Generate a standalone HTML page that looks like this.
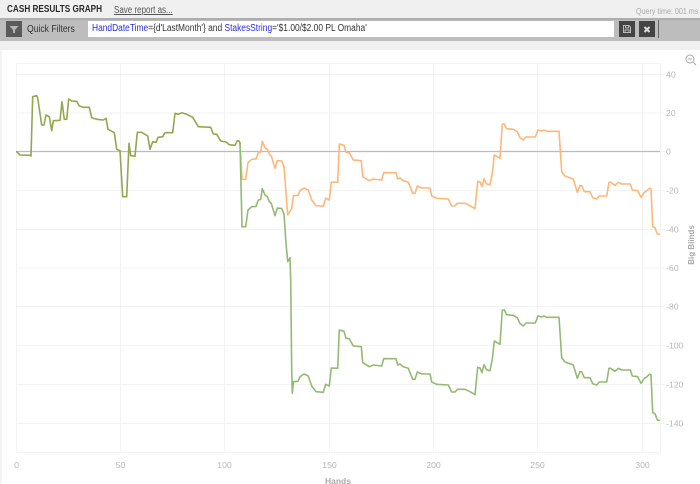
<!DOCTYPE html>
<html><head><meta charset="utf-8">
<style>
html,body{margin:0;padding:0;width:700px;height:484px;overflow:hidden;background:#fff;font-family:"Liberation Sans",sans-serif}
.abs{position:absolute}
.t{transform-origin:0 50%;white-space:nowrap}
#w{position:absolute;left:0;top:0;width:700px;height:484px;filter:blur(0.35px);overflow:hidden}
</style></head>
<body>
<div id="w">
<div class="abs" style="left:0;top:0;width:700px;height:50px;background:#f0f0f0"></div>
<div class="abs" style="left:0;top:50px;width:2px;height:434px;background:#f4f4f4"></div>
<div class="abs t" style="left:7px;top:3px;font-size:10px;font-weight:bold;line-height:13px;color:#2a2a2a;transform:scaleX(.82)">CASH RESULTS GRAPH</div>
<div class="abs t" style="left:114px;top:4px;font-size:10px;line-height:13px;color:#555;text-decoration:underline;transform:scaleX(.8)">Save report as...</div>
<div class="abs t" style="left:636px;top:6px;font-size:8.5px;line-height:10px;color:#aaa;transform:scaleX(.84)">Query time: 001 ms</div>
<div class="abs" style="left:0;top:18px;width:700px;height:23px;background:#bdbdbd"></div>
<div class="abs" style="left:0;top:18px;width:700px;height:2px;background:#adadad"></div>
<div class="abs" style="left:6px;top:21px;width:16px;height:16px;background:#5a5a5a"></div>
<svg class="abs" style="left:6px;top:21px" width="16" height="16"><path d="M3.5 5H12.5L9 9V12H7V9Z" fill="#b5b5b5"/></svg>
<div class="abs t" style="left:27px;top:23px;font-size:10px;line-height:13px;color:#333;transform:scaleX(.86)">Quick Filters</div>
<div class="abs" style="left:88px;top:21px;width:526px;height:16px;background:#fff"></div>
<div class="abs t" style="left:92px;top:22px;font-size:10px;line-height:13px;color:#333;transform:scaleX(.84)"><span style="color:#2a2ae0">HandDateTime</span>={d'LastMonth'} and <span style="color:#2a2ae0">StakesString</span>='$1.00/$2.00 PL Omaha'</div>
<div class="abs" style="left:619px;top:21px;width:16px;height:16px;background:#444"></div>
<svg class="abs" style="left:619px;top:21px" width="16" height="16"><path d="M4.5 4.5H10L11.5 6V11.5H4.5ZM6.5 4.5V7H9.5V4.5M6 11.5V9H10V11.5" fill="none" stroke="#bbb" stroke-width="1"/></svg>
<div class="abs" style="left:639px;top:21px;width:16px;height:16px;background:#444"></div>
<svg class="abs" style="left:639px;top:21px" width="16" height="16"><path d="M5.5 6L10.5 11M10.5 6L5.5 11" fill="none" stroke="#ddd" stroke-width="2"/></svg>
<div class="abs" style="left:658px;top:20px;width:1px;height:18px;background:#666"></div>

<svg class="abs" style="left:0;top:0" width="700" height="484">
<defs>
<path id="p1" d="M242 179.3L245.7 179.3L248 162.7L251.7 159.3L256 159L258.3 152.7L260.7 152L262.3 141.3L265 147.7L267.3 149.3L269.3 154.3L271.3 156L275 168.3L277.3 160.7L281.7 161L284 166.7"/>
<path id="p2" d="M293.5 195.7L298 195.3L300 190.7L304 188L308.3 190L311.7 200L316 205.7L323.3 206.3L325.7 198.3L329.3 200L331.3 182L337.7 182.3L339.3 144L344 145.3L346 152.3L349.3 152.7L353.3 160L361.3 160.7L362.7 176.7L369.3 180.7L373.3 179L381.7 180L383.7 172.7L396 172.7L397.7 179L400 178L403.3 180.7L408.3 182.3L412.7 193.3L415 193.3L417.3 186L421.7 188L430 188L431.7 196L436.7 198.3L448.3 199L451.7 206L455 206L457.3 203.3L465 203.3L470 205.7L475 208.7L477.7 181.3L480 182L482 186.7L484 178.7L486.7 184L490 184.7L492.3 173.3L494.3 155L500 158.3L502.3 124L504.3 124L506.7 128.7L513.3 129.3L517.3 131.7L520 137.7L523.3 140L526 137L535.3 137L538 130L541.7 131L544 130L546.7 131.3L559 131.3L561.7 171.7L565 176L573.3 179L577.3 192.3L580 185.7L581.7 185.7L584.3 191.7L590 191.7L592.7 197.7L596.7 199L599.3 196L606.7 196L609 182.3L610.7 182.3L615 185.3L618.3 182.3L621.7 184L630.3 184L632.3 190L637.7 190.7L641 197.3L644.3 192.3L646.7 191L649.3 188.3L651 188.7L652.7 226.7L655 227.7L657.3 234L659.3 234.3"/>
</defs>
<g stroke="#f3f3f3" stroke-width="1" fill="none">
<path d="M16.5 63.5H660M16.5 74.5H660M16.5 113H660M16.5 190.5H660M16.5 229.5H660M16.5 268H660M16.5 306.5H660M16.5 345.5H660M16.5 384.5H660M16.5 423.5H660M16.5 452.5H660"/>
<path d="M16.5 63.5V452.5M120.5 63.5V452.5M224.5 63.5V452.5M329.5 63.5V452.5M433.5 63.5V452.5M537.5 63.5V452.5M642.5 63.5V452.5M660.5 63.5V452.5"/>
<path d="M660 74.5H665M660 113H665M660 151.5H665M660 190.5H665M660 229.5H665M660 268H665M660 306.5H665M660 345.5H665M660 384.5H665M660 423.5H665"/>
</g>
<path d="M16.5 151.5H660" stroke="#bcbcbc" stroke-width="1.3" fill="none"/>
<g fill="none" stroke-width="1.6" stroke-linejoin="round" stroke-linecap="round">
<g stroke="#ffb678">
<use href="#p1"/><use href="#p2"/>
<path d="M240 143.3L242 179.3M284 166.7L287.7 215L291.7 208.3L293.5 195.7"/>
</g>
<g stroke="#93ba72">
<use href="#p1" transform="translate(0 47.4)"/>
<use href="#p2" transform="translate(0 186)"/>
<path d="M240 143.3L242 226.7M284 214.1L286 243.3L287.7 261.7L290 257.7L290.7 280L291.7 370L292.3 393.3L293.5 381.7"/>
</g>
<path stroke="#93a750" d="M16.7 151.7L20 155L30 155.3L31 156L32.7 96.7L36.7 95.7L37.7 98L41.7 125L44 125L46 115L49.3 116.7L51.7 130.7L53.3 120.7L60 120.3L62 101.7L64.3 119.3L66.7 119.3L68.7 99L71.7 101L76.7 101.3L79.3 106L83.3 107.3L89.3 107.3L91.7 117.7L96.7 119.3L103.3 120L106 118.3L108 129.3L114.3 132.7L116.7 149.3L120 150.7L122.7 196.7L126.7 196.7L129 143.3L130.7 155.7L135 156.3L137.3 132.3L141.7 132.3L147.7 136L150 149.3L152.7 141.7L156 142.3L158 137.3L162.7 136.7L165 132.7L172.7 132.7L175 113.3L178.3 114.3L181.7 112.7L186.7 114.3L192.7 117.3L198.3 126.7L210.7 127.3L213.3 134L216.7 134.3L220.7 141L226 142L229.3 144.7L235 145.3L237.3 140.7L239.3 141.3L240 143.3"/>
</g>
<g font-family="Liberation Sans, sans-serif" font-size="8.7" fill="#b8b8b8">
<text x="666" y="77.5">40</text><text x="666" y="116">20</text><text x="666" y="154.5">0</text>
<text x="666" y="193.5">-20</text><text x="666" y="232.5">-40</text><text x="666" y="271">-60</text>
<text x="666" y="309.5">-80</text><text x="666" y="348.5">-100</text><text x="666" y="387.5">-120</text><text x="666" y="426.5">-140</text>
<g text-anchor="middle">
<text x="16.5" y="468">0</text><text x="120.5" y="468">50</text><text x="224.5" y="468">100</text><text x="329.5" y="468">150</text><text x="433.5" y="468">200</text><text x="537.5" y="468">250</text><text x="642.5" y="468">300</text>
</g>
<text x="338" y="484" text-anchor="middle" font-weight="bold" font-size="8.5" fill="#aaa">Hands</text>
<text transform="translate(694 245) rotate(-90)" text-anchor="middle" font-weight="bold" font-size="8" fill="#aaa">Big Blinds</text>
</g>
<g fill="none" stroke="#aaa" stroke-width="1">
<circle cx="690" cy="59" r="4"/>
<path d="M688 59H692M693 62L696 65"/>
</g>
</svg>
</div>
</body></html>
